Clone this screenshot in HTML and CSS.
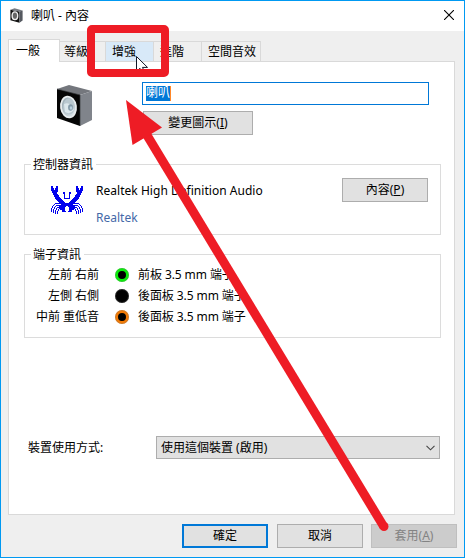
FILE: index.html
```html
<!DOCTYPE html>
<html lang="zh-Hant">
<head>
<meta charset="utf-8">
<title>喇叭 - 內容</title>
<link rel="stylesheet" href="styles.css">
</head>
<body>
<div class="window">
  <header class="titlebar">
    <svg class="title-icon" width="13" height="15" viewBox="0 0 37 43"><path d="M1 5 27 10V42L1 35Z" fill="#111"/><path d="M1 5 13 1 36 7 27 10Z" fill="#777b82"/><path d="M27 10 36 7V36L27 42Z" fill="#555960"/><ellipse cx="14" cy="22" rx="8" ry="11" fill="#666" stroke="#eee" stroke-width="4"/></svg>
    <h1 class="title">喇叭 - 內容</h1>
    <svg class="close" width="10" height="10" viewBox="0 0 10 10"><path d="M0 0 10 10M10 0 0 10" stroke="#000" stroke-width="1.1"/></svg>
  </header>
  <nav class="tabs">
    <div class="tab active">一般</div>
    <div class="tab levels">等級</div>
    <div class="tab hover">增強</div>
    <div class="tab advanced">進階</div>
    <div class="tab spatial">空間音效</div>
  </nav>
  <main class="pane">
    <section class="identity">
      <svg class="speaker" width="37" height="44" viewBox="0 0 37 44">
        <defs>
          <linearGradient id="side" x1="0" y1="0" x2="0" y2="1"><stop offset="0" stop-color="#868990"/><stop offset="1" stop-color="#777b82"/></linearGradient>
          <linearGradient id="cone" x1="0" y1="0" x2="1" y2="1"><stop offset="0" stop-color="#8ea0aa"/><stop offset="1" stop-color="#e9f1f5"/></linearGradient>
        </defs>
        <path d="M1 5 24 10V42L1 34Z" fill="#050505"/>
        <path d="M1 5 13 1 36 7 24 11Z" fill="#74777d"/>
        <path d="M24 11 36 7V36L24 42Z" fill="#80848b"/>
        <path d="M1 5 24 11V42" fill="none" stroke="#34363a" stroke-width=".7"/>
        <ellipse cx="12.500" cy="23" rx="7.500" ry="10.500" transform="rotate(-8 12.500 23)" fill="url(#cone)" stroke="#e8edef" stroke-width="1.800"/>
        <ellipse cx="13" cy="22.500" rx="5.800" ry="8" fill="#b9c8d0"/>
        <path d="M8 20Q14 17 18 26Q14 31 9 28Z" fill="#dbe7ec"/>
        <ellipse cx="14.500" cy="23.500" rx="2.400" ry="3.200" fill="#8299a8"/>
        <ellipse cx="15" cy="24" rx="1.300" ry="1.800" fill="#b8d0de"/>
      </svg>
      <div class="identity-fields">
        <div class="name-input"><span class="selection">喇叭</span></div>
        <div class="button change-icon">變更圖示(<u>I</u>)</div>
      </div>
    </section>
    <section class="group controller">
      <h2 class="legend">控制器資訊</h2>
      <div class="controller-row">
        <svg class="crab" width="32" height="28" viewBox="0 0 32 28" shape-rendering="crispEdges">
          <defs>
            <path id="crab-half" transform="translate(0 .5)" fill="none" stroke="#0000ee" d="M0 0h2M5 0h2M0 1h2M5 1h2M0 2h3M4 2h3M0 3h3M4 3h3M0 4h7M1 5h6M1 6h5M12 6h2M2 7h4M12 7h2M2 8h5M13 8h1M3 9h5M13 9h1M3 10h5M13 10h1M4 11h5M13 11h1M4 12h6M13 12h3M5 13h6M6 14h6M7 15h6M8 16h6M4 17h5M9 17h7M3 18h1M10 18h6M2 19h1M5 19h11M1 20h1M4 20h1M8 20h7M1 21h1M3 21h1M6 21h8M0 22h1M3 22h1M5 22h1M8 22h6M0 23h1M2 23h1M5 23h1M7 23h1M9 23h5M0 24h1M2 24h1M4 24h1M7 24h1M11 24h3M0 25h1M2 25h1M4 25h1M6 25h1M11 25h4M2 26h1M4 26h1M6 26h1M4 27h1M6 27h1"/>
          </defs>
          <use href="#crab-half"/>
          <use href="#crab-half" transform="translate(32 0) scale(-1 1)"/>
        </svg>
        <div class="device">
          <div class="device-name">Realtek High Definition Audio</div>
          <div class="vendor">Realtek</div>
        </div>
        <div class="button properties">內容(<u>P</u>)</div>
      </div>
    </section>
    <section class="group jacks">
      <h2 class="legend">端子資訊</h2>
      <div class="jack-grid">
        <span class="channel">左前 右前</span><i class="jack green"></i><span class="jack-name">前板 3.5 mm 端子</span>
        <span class="channel">左側 右側</span><i class="jack black"></i><span class="jack-name">後面板 3.5 mm 端子</span>
        <span class="channel">中前 重低音</span><i class="jack orange"></i><span class="jack-name">後面板 3.5 mm 端子</span>
      </div>
    </section>
    <section class="usage">
      <span class="usage-label">裝置使用方式:</span>
      <div class="select"><span>使用這個裝置 (啟用)</span><svg width="9" height="6" viewBox="0 0 9 6"><path d="M.5.8 4.500 4.800 8.500.8" fill="none" stroke="#444" stroke-width="1.1"/></svg></div>
    </section>
  </main>
  <footer class="actions">
    <div class="button ok">確定</div>
    <div class="button">取消</div>
    <div class="button disabled">套用(<u>A</u>)</div>
  </footer>
</div>
<svg class="annotation" width="465" height="558" viewBox="0 0 465 558">
  <path d="M136.500 56.500V71.500L140 68.300 142.300 73.500 144.700 72.400 142.500 67.400H147.500Z" fill="#fff" stroke="#111827"/>
  <rect x="91" y="29" width="74" height="44" rx="1" fill="none" stroke="#ee1c25" stroke-width="8" stroke-linejoin="round"/>
  <path d="M143 128.700 384 527" stroke="#ee1c25" stroke-width="9"/>
  <circle cx="384" cy="526.500" r="4.500" fill="#ee1c25"/>
  <path d="M126 100 162 127.500 132.500 145Z" fill="#ee1c25"/>
</svg>
</body>
</html>
```
FILE: styles.css
```css
* { box-sizing: border-box; }
body {
  margin: 0;
  color: #000;
  font: 12px/16px "Noto Sans", "Noto Sans CJK TC", sans-serif;
  white-space: nowrap;
}
.window {
  width: 465px;
  height: 558px;
  border: 1px solid #0099f2;
  background: #efefef;
}
.titlebar {
  display: flex;
  align-items: center;
  height: 30px;
  padding: 0 10px 2px 9px;
  background: #fff;
}
.title-icon { margin-top: 1px; }
.title { margin: 2px auto 0 8px; font-size: 12px; font-weight: 400; }

.tabs { display: flex; align-items: flex-end; height: 30px; padding-left: 7px; }
.tab {
  height: 20px;
  padding: 2px 0 0 4px;
  border: 1px solid #d9d9d9;
  border-width: 1px 1px 0 0;
}
.tab.active {
  position: relative;
  width: 52px;
  height: 23px;
  margin-bottom: -1px;
  padding: 3px 0 0 7px;
  border-left-width: 1px;
  background: #fff;
}
.tab.levels { width: 46px; }
.tab.hover { width: 48px; padding-left: 6px; background: #d8e9f8; }
.tab.advanced { width: 48px; padding-left: 6px; }
.tab.spatial { width: 59px; padding-left: 6px; }

.pane {
  width: 447px;
  height: 454px;
  margin-left: 7px;
  padding-top: 20px;
  border: 1px solid #d9d9d9;
  background: #fff;
}
.identity { display: flex; padding-left: 47px; }
.speaker { margin-top: 2px; }
.identity-fields { margin-left: 49px; }
.name-input {
  width: 287px;
  height: 23px;
  padding: 3px;
  border: 1px solid #0078d7;
}
.selection { display: block; width: 25px; height: 15px; border-right: 1px solid #ff8728; background: #0078d7; color: #fff; line-height: 14px; }
.button {
  display: flex;
  align-items: center;
  justify-content: center;
  width: 86px;
  height: 24px;
  padding-bottom: 1px;
  border: 1px solid #adadad;
  background: #e1e1e1;
}
.button u { text-underline-offset: 1px; }
.change-icon { width: 110px; margin: 6px 0 0 1px; }

.group { width: 417px; margin-left: 15px; border: 1px solid #dcdcdc; }
.controller { height: 71px; margin-top: 29px; }
.jacks { height: 84px; margin-top: 19px; }
.legend {
  width: max-content;
  margin: -8px 0 0 6px;
  padding: 0 3px 0 2px;
  background: #fff;
  font-size: 12px;
  font-weight: 400;
}
.controller-row { display: flex; padding: 5px 12px 0 26px; }
.crab { margin-top: 8px; }
.device { margin: 5px auto 0 13px; }
.device-name { letter-spacing: .03px; }
.vendor { margin-top: 11px; color: #4468a8; }
.jack-grid {
  display: grid;
  grid-template-columns: 74px 14px auto;
  grid-auto-rows: 21px;
  column-gap: 16px;
  align-items: center;
  margin-top: 1px;
}
.channel { text-align: right; }
.jack { width: 14px; height: 14px; border: 3px solid; border-radius: 50%; background: #000; outline: 1px solid #7775; outline-offset: -1px; }
.jack-name { margin-left: -7px; letter-spacing: -.08px; }
.green { border-color: #08f008; }
.black { border-color: #000; }
.orange { border-color: #f57c05; }

.usage { display: flex; align-items: center; margin-top: 98px; padding-left: 19px; }
.usage-label { width: 128px; }
.select {
  display: flex;
  align-items: center;
  justify-content: space-between;
  width: 284px;
  height: 23px;
  padding: 0 4px;
  border: 1px solid #adadad;
  background: #e1e1e1;
}
.actions { display: flex; gap: 9px; padding: 9px 0 0 181px; }
.ok { border: 2px solid #0078d7; }
.disabled { margin-left: -1px; border-color: #bfbfbf; background: #ccc; color: #838383; }
.annotation { position: absolute; top: 0; left: 0; pointer-events: none; }
```
